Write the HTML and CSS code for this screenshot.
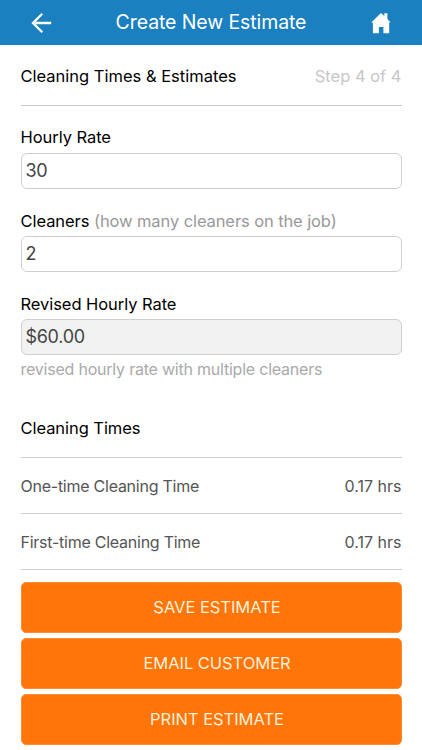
FILE: index.html
```html
<!DOCTYPE html>
<html lang="en">
  <head>
    <meta charset="UTF-8" />
    <meta name="viewport" content="width=device-width, initial-scale=1.0" />
    <title>Create New Estimate</title>
    <link rel="stylesheet" href="styles.css">
  </head>
  <body>
    <header class="top-bar">
      <a class="nav-link" href="#" aria-label="Back">
        <svg width="22" height="22" viewBox="0 0 22 22" fill="none" stroke="#fff" stroke-width="2.3">
          <path d="M12.3 1.8 L3 11 L12.3 20.2 M3.2 11 H21.2" />
        </svg>
      </a>
      <h1>Create New Estimate</h1>
      <a class="nav-link" href="#" aria-label="Home">
        <svg width="22" height="22" viewBox="0 0 22 22" fill="#fff">
          <path d="M11 1 L14.3 4 V1.3 H17.4 V7.1 L20.6 10.6 H19.2 V21.3 H13.4 V15 H8.9 V21.3 H2.9 V10.6 H1.2 Z" />
        </svg>
      </a>
    </header>

    <main>
      <div class="section-title">
        <h2>Cleaning Times &amp; Estimates</h2>
        <span class="step">Step 4 of 4</span>
      </div>

      <form id="estimateForm">
        <div class="field">
          <label for="hourlyRate">Hourly Rate</label>
          <input type="text" id="hourlyRate" name="hourlyRate" value="30">
        </div>
        <div class="field">
          <label for="cleaners">Cleaners <span class="hint">(how many cleaners on the job)</span></label>
          <input type="text" id="cleaners" name="cleaners" value="2">
        </div>
        <div class="field">
          <label for="revisedRate">Revised Hourly Rate</label>
          <input type="text" id="revisedRate" name="revisedRate" value="$60.00" readonly>
          <p class="help">revised hourly rate with multiple cleaners</p>
        </div>

        <h2 class="times-title">Cleaning Times</h2>
        <div class="time-row">
          <span>One-time Cleaning Time</span>
          <span class="hours">0.17 hrs</span>
        </div>
        <div class="time-row">
          <span>First-time Cleaning Time</span>
          <span class="hours">0.17 hrs</span>
        </div>

        <div class="actions">
          <button type="button">SAVE ESTIMATE</button>
          <button type="button">EMAIL CUSTOMER</button>
          <button type="button">PRINT ESTIMATE</button>
        </div>
      </form>
    </main>
  </body>
</html>
```
FILE: styles.css
```css
* {
  box-sizing: border-box;
}
body {
  margin: 0;
  background-color: #fff;
  color: #000;
  font-family: Inter, "Liberation Sans", sans-serif;
  font-size: 16.5px;
  line-height: 20px;
  letter-spacing: -0.06px;
}
h1,
h2,
p {
  margin: 0;
  font-size: inherit;
  font-weight: 400;
}
.top-bar {
  display: flex;
  align-items: center;
  justify-content: space-between;
  height: 45px;
  padding: 0 30px;
  background-color: #1a80bf;
  color: #fff;

  h1 {
    padding-bottom: 2px;
    font-size: 19.5px;
    letter-spacing: -0.1px;
  }
}
.nav-link {
  display: flex;
}
main {
  padding: 0 20.5px;
}
.section-title {
  display: flex;
  align-items: center;
  justify-content: space-between;
  height: 61px;
  padding-top: 2px;
  border-bottom: 1px solid #c8c8c8;
  letter-spacing: 0;
}
.step {
  color: #c7c7c7;
}
.field {
  padding-top: 21px;
  margin-bottom: 5px;

  label {
    display: block;
    height: 26px;
  }

  input {
    display: block;
    width: 100%;
    height: 36px;
    padding: 0 4px 1px;
    border: 1px solid #cfcfcf;
    border-radius: 6px;
    background-color: #fff;
    color: #444;
    font: inherit;
    font-size: 18px;
    letter-spacing: -0.3px;
    outline: none;
  }

  input[readonly] {
    background-color: #f2f2f2;
  }
}
.field + .field {
  padding-top: 17px;

  label {
    height: 25px;
  }
}
.hint {
  color: #999;
  letter-spacing: -0.1px;
}
.help {
  padding-top: 4px;
  color: #aaa;
  font-size: 16px;
  letter-spacing: -0.22px;
}
.times-title {
  height: 39px;
  margin-top: 39px;
}
.time-row {
  display: flex;
  align-items: center;
  justify-content: space-between;
  height: 56px;
  padding-top: 1px;
  border-top: 1px solid #cfcfcf;
  color: #555;
  font-size: 16px;
  letter-spacing: -0.25px;
}
.hours {
  letter-spacing: 0;
}
.actions {
  display: flex;
  flex-direction: column;
  gap: 5px;
  padding-top: 12px;
  border-top: 1px solid #cfcfcf;

  button {
    height: 51px;
    padding: 0 0 1px 12px;
    border: 1px solid #ff8c32;
    border-radius: 5px;
    background-color: #ff750a;
    color: #fff0d8;
    font: inherit;
    letter-spacing: -0.04px;
  }
}
```
